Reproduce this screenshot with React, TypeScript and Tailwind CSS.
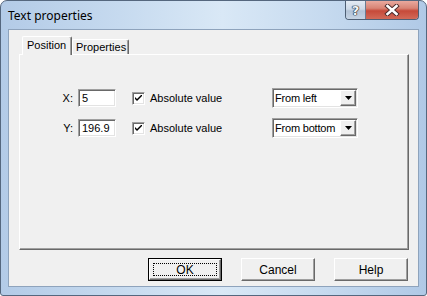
import React from "react";

const ui = "font-['Liberation_Sans',Arial,sans-serif] text-[11px] text-black";

function Raised({ children, className = "" }: { children?: React.ReactNode; className?: string }) {
  return (
    <div
      className={`border border-t-white border-l-white border-r-[#696969] border-b-[#696969] shadow-[inset_-1px_-1px_0_#a0a0a0] bg-[#f0f0f0] ${className}`}
    >
      {children}
    </div>
  );
}

function Sunken({ children, className = "" }: { children?: React.ReactNode; className?: string }) {
  return (
    <div
      className={`border border-t-[#a0a0a0] border-l-[#a0a0a0] border-r-white border-b-white shadow-[inset_1px_1px_0_#696969,inset_-1px_-1px_0_#e3e3e3] bg-white ${className}`}
    >
      {children}
    </div>
  );
}

function Checkbox() {
  return (
    <Sunken className="w-[13px] h-[13px] flex items-center justify-center">
      <svg width="7" height="7" viewBox="0 0 7 7">
        <path d="M0 2 L0 4 L2 6 L7 1 L7 -1 L2 4 Z" fill="#000" />
      </svg>
    </Sunken>
  );
}

function Select({ value }: { value: string }) {
  return (
    <Sunken className="w-[86px] h-[20px] flex items-stretch p-[1px]">
      <div className="flex-1 pl-[1px] flex items-center leading-none tracking-[-0.2px] whitespace-nowrap overflow-hidden">{value}</div>
      <Raised className="w-[16px] flex items-center justify-center">
        <svg width="7" height="4" viewBox="0 0 7 4">
          <path d="M0 0 H7 L3.5 4 Z" fill="#000" />
        </svg>
      </Raised>
    </Sunken>
  );
}

function Row({ label, value, dir }: { label: string; value: string; dir: string }) {
  return (
    <div className="h-[20px] flex items-center">
      <div className="w-[53px] text-right leading-none">{label}</div>
      <Sunken className="ml-[5px] w-[38px] h-[18px] flex items-center pl-[3px] leading-none">{value}</Sunken>
      <div className="ml-[16px] w-[140px] flex items-center">
        <Checkbox />
        <span className="ml-[5px] leading-none">Absolute value</span>
      </div>
      <Select value={dir} />
    </div>
  );
}

function Btn({ label, def = false }: { label: string; def?: boolean }) {
  if (def) {
    return (
      <div className="w-[74px] h-[23px] border border-black">
        <Raised className="w-full h-full relative flex items-center justify-center">
          <div className="absolute left-[3px] top-[3px] right-[3px] bottom-[3px] border border-dotted border-black" />
          <span className="leading-none text-[12px]">{label}</span>
        </Raised>
      </div>
    );
  }
  return (
    <Raised className="w-[74px] h-[23px] flex items-center justify-center">
      <span className="leading-none text-[12px]">{label}</span>
    </Raised>
  );
}

export default function App() {
  return (
    <div className="w-[427px] h-[296px] overflow-hidden bg-white">
      <div className="relative flex flex-col w-[427px] h-[296px] border border-[#55677e] rounded-t-[7px] rounded-b-[3px] bg-[linear-gradient(90deg,#b3cbe7_0%,#c6daef_28%,#d9e8f6_52%,#c6daef_76%,#b0c9e6_100%)]">
        <div className="h-[28px] flex items-center pl-[7px] pt-[1px] text-[12px] text-black font-['Noto_Sans',sans-serif]">
          Text properties
        </div>
        <div className="absolute top-0 right-[7px] flex h-[19px] border border-t-0 border-[#4e5f74] rounded-b-[4px] overflow-hidden">
          <div className="w-[20px] h-full flex items-center justify-center bg-[linear-gradient(180deg,#e3ebf4_0%,#cdd9e7_45%,#b3c3d6_55%,#c6d4e4_100%)] border-r border-[#6b7c91]">
            <span className="font-['DejaVu_Sans',sans-serif] font-bold text-[13px] leading-none text-[#f4f6f9] [text-shadow:0_0_1px_#1f2a36,0_0_1px_#1f2a36,0_0_1px_#1f2a36,0_0_1px_#1f2a36]">
              ?
            </span>
          </div>
          <div className="w-[52px] h-full flex items-center justify-center bg-[linear-gradient(180deg,#e9a99e_0%,#d88475_40%,#c64a3a_55%,#d26a58_100%)]">
            <svg width="16" height="12" viewBox="0 0 16 12">
              <path d="M3.5 2 L12.5 10 M12.5 2 L3.5 10" stroke="#4a2a2a" strokeWidth="4.4" strokeLinecap="square" />
              <path d="M3.5 2 L12.5 10 M12.5 2 L3.5 10" stroke="#ffffff" strokeWidth="2.6" strokeLinecap="square" />
            </svg>
          </div>
        </div>
        <div className={`mx-[7px] h-[258px] bg-[#f0f0f0] border border-[#8ea3bc] flex flex-col pl-[10px] pr-[9px] pt-[6px] ${ui}`}>
          <div className="h-[18px] flex items-end relative z-10">
            <div className="ml-[3px] w-[50px] h-[19px] mb-[-1px] bg-[#f0f0f0] border-t border-l border-white border-r border-r-[#696969] rounded-tl-[2px] rounded-tr-[2px] shadow-[inset_-1px_0_0_#a0a0a0] flex items-start pt-[3px] pl-[4px]">
              <span className="leading-none">Position</span>
            </div>
            <div className="w-[57px] h-[15px] bg-[#f0f0f0] border-t border-l border-white border-r border-r-[#696969] rounded-tl-[2px] rounded-tr-[2px] shadow-[inset_-1px_0_0_#a0a0a0] flex items-start pt-[2px] pl-[3px]">
              <span className="leading-none">Properties</span>
            </div>
          </div>
          <div className="h-[196px] border border-t-white border-l-white border-r-[#696969] border-b-[#696969] shadow-[inset_-1px_-1px_0_#a0a0a0] pt-[33px] flex flex-col gap-[10px]">
            <Row label="X:" value="5" dir="From left" />
            <Row label="Y:" value="196.9" dir="From bottom" />
          </div>
          <div className="mt-[8px] flex justify-end gap-[19px] mr-[1px]">
            <Btn label="OK" def />
            <Btn label="Cancel" />
            <Btn label="Help" />
          </div>
        </div>
      </div>
    </div>
  );
}
